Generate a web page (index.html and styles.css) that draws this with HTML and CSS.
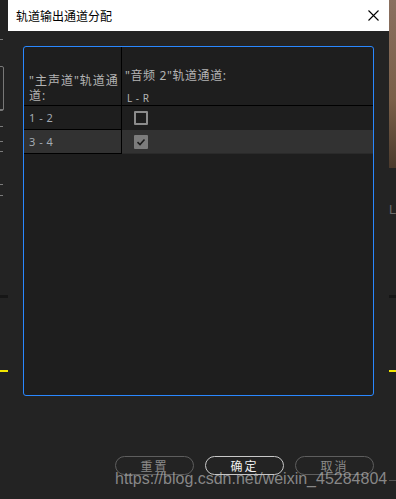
FILE: index.html
```html
<!DOCTYPE html>
<html lang="zh-CN">
<head>
    <meta charset="UTF-8">
    <meta name="viewport" content="width=device-width, initial-scale=1.0">
    <title>轨道输出通道分配</title>
    <link rel="stylesheet" href="styles.css">
</head>
<body>

    <div class="screen">
        <div class="side side-left">
            <span class="tick t1"></span>
            <span class="bracket"></span>
            <span class="tick t2"></span>
            <span class="tick t3"></span>
            <span class="tick t4"></span>
            <span class="tick t5"></span>
            <span class="tick t6"></span>
            <span class="tick t7"></span>
            <span class="bar-dark"></span>
            <span class="bar-yellow"></span>
        </div>

        <div class="dialog">
            <div class="titlebar">
                <span class="title">轨道输出通道分配</span>
                <svg class="close" width="11" height="11" viewBox="0 0 11 11">
                    <path d="M0.5 0.5 L10.5 10.5 M10.5 0.5 L0.5 10.5" stroke="#000" stroke-width="1.1" fill="none"/>
                </svg>
            </div>

            <div class="body">
                <div class="panel">
                    <div class="grid">
                        <div class="cell head head-left">"主声道"轨道通道:</div>
                        <div class="cell head head-right">
                            <div class="head-name">"音频 2"轨道通道:</div>
                            <div class="head-sub">L - R</div>
                        </div>

                        <div class="cell label">1 - 2</div>
                        <div class="cell check">
                            <span class="box"></span>
                        </div>

                        <div class="cell label alt">3 - 4</div>
                        <div class="cell check alt">
                            <span class="box checked">
                                <svg width="10" height="10" viewBox="0 0 10 10">
                                    <path d="M1.5 5.2 L4 7.5 L8.5 2.5" stroke="#1c1c1c" stroke-width="1.6" fill="none"/>
                                </svg>
                            </span>
                        </div>
                    </div>
                </div>

                <div class="buttons">
                    <button class="btn">重置</button>
                    <button class="btn primary">确定</button>
                    <button class="btn">取消</button>
                </div>

                <div class="watermark">https://blog.csdn.net/weixin_45284804</div>
            </div>
        </div>

        <div class="side side-right">
            <span class="photo"></span>
            <span class="letters">LO</span>
            <span class="bar-dark"></span>
            <span class="bar-line"></span>
            <span class="bar-yellow"></span>
        </div>
    </div>

</body>
</html>
```

FILE: styles.css
```css
body {
    margin: 0;
    padding: 0;
    background-color: #1f1f1f;
    font-family: "Noto Sans", "Noto Sans CJK SC", sans-serif;
    overflow: hidden;
}

.screen {
    display: flex;
    width: 396px;
    height: 499px;
}

/* background application strips */
.side {
    position: relative;
    overflow: hidden;
    background-color: #232323;
}

.side-left {
    width: 8px;
}

.side-right {
    width: 7px;
}

.tick {
    position: absolute;
    left: 0;
    width: 3px;
    height: 1px;
    background-color: #7a7a7a;
}

.t1 { top: 39px; }
.t2 { top: 109px; }
.t3 { top: 126px; }
.t4 { top: 141px; }
.t5 { top: 151px; }
.t6 { top: 184px; }
.t7 { top: 195px; }

.bracket {
    position: absolute;
    left: -4px;
    top: 66px;
    width: 6px;
    height: 43px;
    border: 1px solid #777;
    border-radius: 2px;
}

.bar-dark {
    position: absolute;
    left: 0;
    right: 0;
    top: 295px;
    height: 3px;
    background-color: #161616;
}

.bar-yellow {
    position: absolute;
    left: 0;
    right: 0;
    top: 370px;
    height: 2px;
    background-color: #f2e600;
}

.photo {
    position: absolute;
    left: 0;
    right: 0;
    top: 0;
    height: 168px;
    background: linear-gradient(#8a7060, #7a5f48 60%, #4b3a2c);
}

.letters {
    position: absolute;
    left: 0;
    top: 202px;
    font-family: "Liberation Sans", sans-serif;
    font-size: 13px;
    color: #6a6a6a;
}

.bar-line {
    position: absolute;
    left: 0;
    right: 0;
    top: 480px;
    height: 1px;
    background-color: #555;
}

/* dialog */
.dialog {
    width: 381px;
    display: flex;
    flex-direction: column;
    background-color: #232323;
}

.titlebar {
    height: 31px;
    background-color: #fff;
    display: flex;
    align-items: center;
    justify-content: space-between;
    padding: 0 10px 0 8px;
}

.title {
    font-family: "Noto Sans CJK SC", sans-serif;
    font-size: 12px;
    color: #000;
    margin-top: -1px;
}

.close {
    margin-top: -1px;
}

.body {
    position: relative;
    flex: 1;
    padding: 15px 15px 0 15px;
}

.panel {
    height: 348px;
    border: 1px solid #2a88ff;
    border-radius: 3px;
    background-color: #1e1e1e;
}

.grid {
    display: grid;
    grid-template-columns: 98px 1fr;
    grid-template-rows: 59px 24px 24px;
}

.cell {
    border-bottom: 1px solid #000;
}

.head {
    color: #b4b4b4;
    font-size: 12px;
}

.head-left {
    border-right: 1px solid #000;
    padding: 0 2px 2px 5px;
    display: flex;
    align-items: flex-end;
    line-height: 15px;
    letter-spacing: 1px;
}

.head-right {
    padding: 21px 0 0 3px;
}

.head-name {
    line-height: 16px;
    letter-spacing: 0.6px;
}

.head-sub {
    font-size: 10px;
    margin-top: 7px;
    padding-left: 2px;
    letter-spacing: 0.5px;
}

.label {
    border-right: 1px solid #000;
    padding-left: 5px;
    display: flex;
    align-items: center;
    font-size: 11px;
    color: #a3abb3;
    letter-spacing: 0.5px;
}

.check {
    border-bottom: none;
    display: flex;
    align-items: center;
    padding-left: 12px;
}

.alt {
    background-color: #323232;
}

.check.alt {
    border-bottom: 1px solid #2a2a2a;
}

.box {
    width: 10px;
    height: 10px;
    border: 2px solid #8c8c8c;
    border-radius: 1px;
}

.box.checked {
    background-color: #7c7c7c;
    border-color: #7c7c7c;
    display: flex;
    align-items: center;
    justify-content: center;
}

.box.checked svg {
    display: block;
}

.buttons {
    display: flex;
    justify-content: flex-end;
    gap: 11px;
    margin-top: 60px;
}

.btn {
    width: 79px;
    height: 19px;
    padding: 0;
    background: transparent;
    border: 1px solid #5e5e5e;
    border-radius: 10px;
    color: #8a8a8a;
    font-family: "Noto Sans CJK SC", sans-serif;
    font-size: 12px;
    line-height: 17px;
    letter-spacing: 2px;
}

.btn.primary {
    border-color: #c8c8c8;
    color: #f0f0f0;
}

.watermark {
    position: absolute;
    left: 107px;
    top: 439px;
    font-family: "Liberation Sans", Arial, sans-serif;
    font-size: 16px;
    color: rgba(205, 205, 205, 0.6);
    white-space: nowrap;
}
```
